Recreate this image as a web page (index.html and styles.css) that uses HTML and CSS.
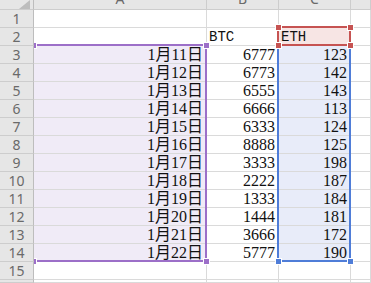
FILE: index.html
```html
<!DOCTYPE html>
<html lang="zh">
<head>
    <meta charset="utf-8">
    <title>Sheet</title>
    <link rel="stylesheet" href="styles.css">
</head>
<body>
<div class="sheet">
    <div class="grid">
        <div class="corner"><svg width="33" height="9" viewBox="0 0 33 9"><polygon points="19,9 30,9 30,0" fill="#bdbdbd"/></svg></div>
        <div class="colhead">A</div>
        <div class="colhead">B</div>
        <div class="colhead">C</div>
        <div class="colhead"></div>

        <div class="rowhead">1</div><div></div><div></div><div></div><div></div>
        <div class="rowhead">2</div><div></div><div class="txt">BTC</div><div class="txt fill-red">ETH</div><div></div>
        <div class="rowhead">3</div><div class="num fill-purple">1月11日</div><div class="num">6777</div><div class="num fill-blue">123</div><div></div>
        <div class="rowhead">4</div><div class="num fill-purple">1月12日</div><div class="num">6773</div><div class="num fill-blue">142</div><div></div>
        <div class="rowhead">5</div><div class="num fill-purple">1月13日</div><div class="num">6555</div><div class="num fill-blue">143</div><div></div>
        <div class="rowhead">6</div><div class="num fill-purple">1月14日</div><div class="num">6666</div><div class="num fill-blue">113</div><div></div>
        <div class="rowhead">7</div><div class="num fill-purple">1月15日</div><div class="num">6333</div><div class="num fill-blue">124</div><div></div>
        <div class="rowhead">8</div><div class="num fill-purple">1月16日</div><div class="num">8888</div><div class="num fill-blue">125</div><div></div>
        <div class="rowhead">9</div><div class="num fill-purple">1月17日</div><div class="num">3333</div><div class="num fill-blue">198</div><div></div>
        <div class="rowhead">10</div><div class="num fill-purple">1月18日</div><div class="num">2222</div><div class="num fill-blue">187</div><div></div>
        <div class="rowhead">11</div><div class="num fill-purple">1月19日</div><div class="num">1333</div><div class="num fill-blue">184</div><div></div>
        <div class="rowhead">12</div><div class="num fill-purple">1月20日</div><div class="num">1444</div><div class="num fill-blue">181</div><div></div>
        <div class="rowhead">13</div><div class="num fill-purple">1月21日</div><div class="num">3666</div><div class="num fill-blue">172</div><div></div>
        <div class="rowhead">14</div><div class="num fill-purple">1月22日</div><div class="num">5777</div><div class="num fill-blue">190</div><div></div>
        <div class="rowhead">15</div><div></div><div></div><div></div><div></div>
        <div class="rowhead"></div><div></div><div></div><div></div><div></div>
    </div>

    <!-- selection ranges drawn over the grid -->
    <div class="range range-purple">
        <span class="handle tl"></span><span class="handle tr"></span>
        <span class="handle bl"></span><span class="handle br"></span>
    </div>
    <div class="range range-blue">
        <span class="handle bl"></span><span class="handle br"></span>
    </div>
    <div class="range range-red">
        <span class="handle tl"></span><span class="handle tr"></span>
        <span class="handle bl"></span><span class="handle br"></span>
    </div>
</div>
</body>
</html>
```

FILE: styles.css
```css
body {
    margin: 0;
    background: #fff;
    overflow: hidden;
}

.sheet {
    position: relative;
    height: 283px;
    overflow: hidden;
}

.grid {
    display: grid;
    grid-template-columns: 34px 173px 72px 72px 1fr;
    grid-template-rows: 10px repeat(15, 18px) 3px;
    font-family: "Liberation Serif", "Noto Sans CJK SC", serif;
    font-size: 16px;
    line-height: 17px;
    color: #111;
}

.grid > div {
    box-sizing: border-box;
    border-right: 1px solid #dadada;
    border-bottom: 1px solid #dadada;
    white-space: nowrap;
    overflow: hidden;
}

.corner, .colhead, .rowhead {
    background: #e6e6e6;
    color: #6a6a6a;
    font-family: "Noto Sans", sans-serif;
    font-size: 14px;
}

.grid > .corner, .grid > .colhead, .grid > .rowhead {
    border-color: #cdcdcd;
}

.grid > .corner, .grid > .rowhead {
    border-right-color: #bdbdbd;
    position: relative;
    z-index: 2;
}

.corner svg {
    display: block;
}

.colhead {
    display: flex;
    align-items: flex-end;
    justify-content: center;
    padding-bottom: 3px;
    line-height: 14px;
}

.rowhead {
    text-align: center;
    line-height: 16px;
    padding-top: 1px;
}

.num {
    text-align: right;
    padding-right: 3px;
}

.txt {
    font-family: "Liberation Mono", monospace;
    font-size: 14px;
    padding-left: 2px;
    padding-top: 1px;
}

.fill-purple {
    background: #f0ebf7;
}

.fill-blue {
    background: #e8ecf9;
}

.fill-red {
    background: #f7e5e4;
}

.range {
    position: absolute;
    border: 2px solid;
    z-index: 1;
    pointer-events: none;
}

.range-purple {
    border-color: #9c6fc8;
    left: 32px;
    top: 44px;
    width: 171px;
    height: 214px;
}

.range-blue {
    border-color: #4f7dd8;
    left: 277px;
    top: 44px;
    width: 70px;
    height: 214px;
}

.range-red {
    border-color: #c65352;
    left: 277px;
    top: 26px;
    width: 70px;
    height: 16px;
}

.handle {
    position: absolute;
    width: 5px;
    height: 5px;
    border: 1px solid #fff;
}

.range-purple .handle { background: #9c6fc8; }
.range-blue .handle { background: #4f7dd8; }
.range-red .handle { background: #c65352; }

.handle.tl { left: -4px; top: -4px; }
.handle.tr { right: -5px; top: -4px; }
.handle.bl { left: -4px; bottom: -5px; }
.handle.br { right: -5px; bottom: -5px; }
```
